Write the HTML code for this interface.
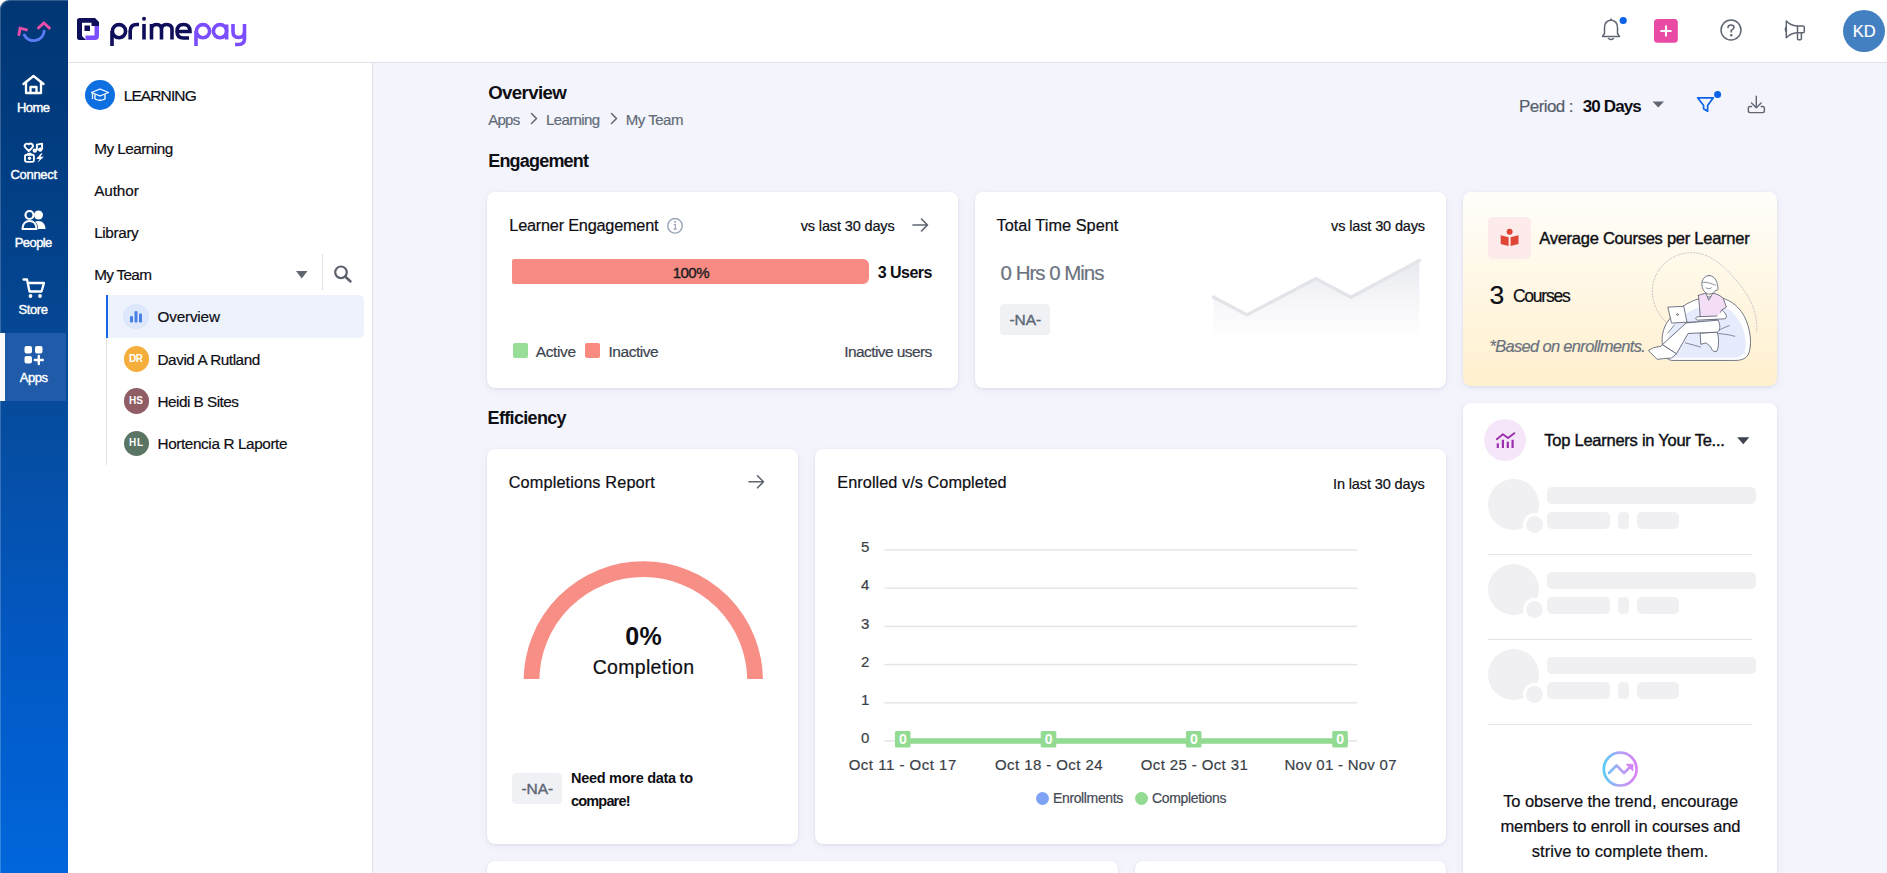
<!DOCTYPE html>
<html><head><meta charset="utf-8"><title>Overview</title>
<style>
html,body{margin:0;padding:0;}
body{width:1887px;height:873px;overflow:hidden;position:relative;font-family:"Liberation Sans",sans-serif;background:#f4f5fc;}
.a{position:absolute;}
.t{position:absolute;white-space:nowrap;}
</style></head><body>
<div class="a" style="left:0px;top:0px;width:1887px;height:873px;background:#f4f5fc;"></div>
<div class="a" style="left:0px;top:0px;width:68px;height:62px;background:#fff;"></div>
<div class="a" style="left:68px;top:0px;width:1819px;height:62px;background:#fff;"></div>
<div class="a" style="left:68px;top:62px;width:1819px;height:1px;background:#dfe1e6;"></div>
<div class="a" style="left:68px;top:63px;width:304px;height:810px;background:#fff;"></div>
<div class="a" style="left:372px;top:63px;width:1px;height:810px;background:#dfe1e6;"></div>
<div class="a" style="left:0;top:0;width:68px;height:873px;border-top-left-radius:9px;box-shadow:inset 1px 1px 0 rgba(255,255,255,0.2);background:linear-gradient(180deg,#013673 0%,#023f85 22%,#064b9c 46%,#0358c2 73%,#0066db 100%);"></div>
<div class="a" style="left:4.5px;top:333px;width:61.5px;height:68px;background:#1f5ba9;"></div>
<div class="a" style="left:0px;top:333px;width:4.5px;height:68px;background:#fafbfd;"></div>
<svg class="a" style="left:0;top:0" width="68" height="62" viewBox="0 0 68 62">
<path d="M18.8 35.8 L20 28.2 L27.6 30.2" fill="none" stroke="#ec4fa8" stroke-width="2.8" stroke-linecap="butt" stroke-linejoin="miter"/>
<path d="M37.6 28.7 L43.8 22.9 L50.3 28.9" fill="none" stroke="#ec4fa8" stroke-width="2.8" stroke-linecap="butt" stroke-linejoin="miter"/>
<path d="M24.3 35 A10.6 10.6 0 0 0 44.2 31.2" fill="none" stroke="#5a7cf2" stroke-width="2.9" stroke-linecap="round"/>
</svg>
<svg class="a" style="left:0;top:62px" width="68" height="340" viewBox="0 62 68 340">
<g fill="none" stroke="#fff" stroke-width="2.3" stroke-linejoin="round" stroke-linecap="round">
<path d="M23.5 84 L33.5 76 L43.5 84"/>
<path d="M26 82 V93 H41 V82"/>
<path d="M30.5 93 V87 H36.5 V93"/>
</g>
<path d="M28.8 151 L25.4 147.6 A2.35 2.35 0 0 1 28.8 144.3 A2.35 2.35 0 0 1 32.2 147.6 Z" fill="none" stroke="#fff" stroke-width="1.9" stroke-linejoin="round"/>
<path d="M36.9 150.6 V144.6 L42.1 143.6 V149.6" fill="none" stroke="#fff" stroke-width="1.9" stroke-linejoin="round"/>
<circle cx="34.8" cy="150.6" r="2.2" fill="#fff"/>
<circle cx="40.2" cy="149.6" r="2.2" fill="#fff"/>
<rect x="25" y="154.8" width="8.9" height="7.1" rx="1.8" fill="none" stroke="#fff" stroke-width="1.9"/>
<rect x="27.3" y="152.8" width="4.3" height="2.5" rx="0.8" fill="#fff"/>
<circle cx="29.5" cy="158.3" r="1.7" fill="#fff"/>
<path d="M41.2 153.2 L36.2 158.9 H39.6 L37.4 162.8 L43.8 156.8 H40.4 L42.6 153.2 Z" fill="#fff"/>
<g fill="none" stroke="#fff" stroke-width="2.2">
<circle cx="29.5" cy="215" r="4"/>
<path d="M22.5 229 c0-5 3-8 7-8 s7 3 7 8z" stroke-linejoin="round"/>
</g>
<circle cx="38.5" cy="215" r="4.5" fill="#fff"/>
<path d="M38.5 221 c4 0 7 3.2 7 8 h-7.5 c0-3.5 -1-6 -3-7.3 c1-.5 2.3-.7 3.5-.7z" fill="#fff"/>
<g fill="none" stroke="#fff" stroke-width="2.3" stroke-linejoin="round" stroke-linecap="round">
<path d="M23.5 279.5 H27 L29.5 291.5 H41.5 L44 283 H28"/>
</g>
<circle cx="30.5" cy="296" r="1.9" fill="#fff"/>
<circle cx="40" cy="296" r="1.9" fill="#fff"/>
<rect x="24.5" y="346" width="7.5" height="7.5" rx="2" fill="#fff"/>
<rect x="35" y="346" width="7.5" height="7.5" rx="2" fill="#fff"/>
<rect x="24.5" y="356" width="7.5" height="7.5" rx="2" fill="#fff"/>
<path d="M38.8 356 V364 M34.8 360 H42.8" stroke="#fff" stroke-width="2.4" stroke-linecap="round"/>
</svg>
<div class="t" style="left:17.00px;top:101.30px;font-size:13px;line-height:13px;color:#ffffff;font-weight:400;-webkit-text-stroke:0.4px currentColor;letter-spacing:-0.595px;">Home</div>
<div class="t" style="left:10.50px;top:168.30px;font-size:13px;line-height:13px;color:#ffffff;font-weight:400;-webkit-text-stroke:0.4px currentColor;letter-spacing:-0.304px;">Connect</div>
<div class="t" style="left:14.80px;top:236.30px;font-size:13px;line-height:13px;color:#ffffff;font-weight:400;-webkit-text-stroke:0.4px currentColor;letter-spacing:-0.596px;">People</div>
<div class="t" style="left:18.50px;top:303.30px;font-size:13px;line-height:13px;color:#ffffff;font-weight:400;-webkit-text-stroke:0.4px currentColor;letter-spacing:-0.393px;">Store</div>
<div class="t" style="left:19.70px;top:371.10px;font-size:13px;line-height:13px;color:#ffffff;font-weight:400;-webkit-text-stroke:0.4px currentColor;letter-spacing:-0.442px;">Apps</div>
<svg class="a" style="left:68px;top:0" width="190" height="62" viewBox="68 0 190 62">
<path d="M77 20.5 Q77 18 79.5 18 H95 L99 22 V26 H91.5 V22.8 H82 V36 L86 40 H79.5 Q77 40 77 37.5z" fill="#0f0e5a"/>
<rect x="84.5" y="25.5" width="5.5" height="5.5" fill="#0f0e5a"/>
<path d="M99 26 V36 Q99 40 95 40 H85.5 V35.5 H94.5 V26z" fill="#7b4dff"/>
<g fill="none" stroke-width="3.6" stroke-linecap="butt">
<g stroke="#0f0e5a">
<path d="M112 46 V31"/><circle cx="119" cy="31.2" r="6.6"/>
<path d="M130.2 39.5 V31 Q130.2 24.5 137 24.5 H139"/>
<path d="M144 39.5 V24"/>
<path d="M151.5 39.5 V24 M151.5 29.5 Q151.5 24.5 156.5 24.5 Q161.5 24.5 161.5 29.5 V39.5 M161.5 29.5 Q161.5 24.5 166.5 24.5 Q172 24.5 172 29.5 V39.5"/>
<path d="M177 31.5 H190 Q190 24.5 183.5 24.5 Q177 24.5 177 31.5 Q177 38 183.5 38 H189"/>
</g>
<g stroke="#7b4dff">
<path d="M196 46 V31"/><circle cx="203" cy="31.2" r="6.6"/>
<circle cx="220" cy="31.2" r="6.6"/><path d="M226.6 24.5 V39.5"/>
<path d="M233 24 V31.5 Q233 37.5 238.5 37.5 Q244.5 37.5 244.5 31.5 V24 M244.5 31.5 V39 Q244.5 44.5 238.5 44.5 H235"/>
</g>
</g>
<circle cx="144" cy="18.8" r="2" fill="#0f0e5a"/>
</svg>
<svg class="a" style="left:1580px;top:0" width="307" height="62" viewBox="1580 0 307 62">
<g fill="none" stroke="#5f6672" stroke-width="1.5" stroke-linejoin="round">
<path d="M1602.5 36.5 H1619.5 L1617.5 33.5 V27.5 Q1617.5 21 1611 20 Q1604.5 21 1604.5 27.5 V33.5z"/>
<path d="M1608.5 38.5 Q1611 40.5 1613.5 38.5" stroke-linecap="round"/>
<path d="M1611 18.5 V20"/>
</g>
<circle cx="1623.2" cy="20.5" r="3.6" fill="#0a63e8"/>
<rect x="1654" y="19" width="23.8" height="23.8" rx="3.5" fill="#e84aa4"/>
<path d="M1666 25.4 V36.6 M1660.4 31 H1671.6" stroke="#fff" stroke-width="2.1" stroke-linecap="butt"/>
<circle cx="1731" cy="30" r="10" fill="none" stroke="#5f6672" stroke-width="1.5"/>
<path d="M1728 27.6 Q1728 25 1731 25 Q1734 25 1734 27.3 Q1734 29 1731.2 30.5 V32" fill="none" stroke="#5f6672" stroke-width="1.6" stroke-linecap="round"/>
<circle cx="1731.2" cy="35.3" r="1.2" fill="#5f6672"/>
<g fill="none" stroke="#5f6672" stroke-width="1.5" stroke-linejoin="round" stroke-linecap="round">
<path d="M1786.3 21 Q1790.5 25.5 1797 26 H1803 Q1804.3 26 1804.3 27.3 V31.4 Q1804.3 32.7 1803 32.7 H1797 Q1790.5 33.2 1786.3 37.7 Z"/>
<path d="M1797.5 26 V32.7 M1797.5 32.7 V38.8 Q1797.5 39.8 1798.5 39.8 H1800.4 Q1801.4 39.8 1801.4 38.8 V32.7"/>
<path d="M1785.8 27.6 Q1784.5 29.4 1785.8 31.2"/>
</g>
</svg>
<div class="a" style="left:1843px;top:9.8px;width:42px;height:42px;border-radius:50%;background:#4380c1;"></div>
<div class="t" style="left:1852.70px;top:22.83px;font-size:16.5px;line-height:16.5px;color:#fff;-webkit-text-stroke:0.2px currentColor;letter-spacing:0.181px;">KD</div>
<div class="a" style="left:85px;top:80px;width:30px;height:30px;border-radius:50%;background:#0d6fe0;"></div>
<svg class="a" style="left:85px;top:80px" width="30" height="30" viewBox="0 0 30 30">
<g fill="none" stroke="#fff" stroke-width="1.3" stroke-linejoin="round">
<path d="M6.5 12.5 L15 9 L23.5 12.5 L15 16z"/>
<path d="M10 14.3 V19 Q15 21.5 20 19 V14.3"/>
<path d="M7.5 13.2 V19"/>
</g></svg>
<div class="t" style="left:123.70px;top:88.38px;font-size:15.5px;line-height:15.5px;color:#0e0e14;-webkit-text-stroke:0.2px currentColor;letter-spacing:-0.891px;">LEARNING</div>
<div class="t" style="left:94.20px;top:141.05px;font-size:15.3px;line-height:15.3px;color:#0e0e14;-webkit-text-stroke:0.2px currentColor;letter-spacing:-0.520px;">My Learning</div>
<div class="t" style="left:94.20px;top:183.05px;font-size:15.3px;line-height:15.3px;color:#0e0e14;-webkit-text-stroke:0.2px currentColor;letter-spacing:-0.095px;">Author</div>
<div class="t" style="left:94.20px;top:225.05px;font-size:15.3px;line-height:15.3px;color:#0e0e14;-webkit-text-stroke:0.2px currentColor;letter-spacing:-0.362px;">Library</div>
<div class="t" style="left:94.20px;top:267.05px;font-size:15.3px;line-height:15.3px;color:#0e0e14;-webkit-text-stroke:0.2px currentColor;letter-spacing:-0.680px;">My Team</div>
<svg class="a" style="left:280px;top:250px" width="90" height="40" viewBox="280 250 90 40">
<path d="M296 271 H307.5 L301.75 278.5z" fill="#5f6672"/>
<rect x="322" y="254" width="1" height="40" fill="#e2e4e8"/>
<circle cx="341" cy="272.3" r="5.8" fill="none" stroke="#5b616d" stroke-width="2.2"/>
<path d="M345.2 276.5 L350.5 281.5" stroke="#5b616d" stroke-width="2.5" stroke-linecap="round"/>
</svg>
<div class="a" style="left:106px;top:295px;width:1px;height:170px;background:#dfe1e6;"></div>
<div class="a" style="left:106px;top:295px;width:258px;height:43px;background:#edf2fd;border-radius:0 5px 5px 0;"></div>
<div class="a" style="left:106px;top:295px;width:2px;height:43px;background:#1a66e0;"></div>
<div class="a" style="left:123px;top:303.5px;width:25.5px;height:25.5px;border-radius:50%;background:#dde7fb;"></div>
<svg class="a" style="left:123px;top:303.5px" width="26" height="26" viewBox="0 0 26 26">
<g fill="#4a80e6"><rect x="7" y="12" width="3" height="6.5" rx="1.2"/><rect x="11.5" y="7" width="3" height="11.5" rx="1.2"/><rect x="16" y="9.5" width="3" height="9" rx="1.2"/></g>
</svg>
<div class="t" style="left:157.50px;top:309.05px;font-size:15.3px;line-height:15.3px;color:#0e0e14;-webkit-text-stroke:0.2px currentColor;letter-spacing:-0.186px;">Overview</div>
<div class="a" style="left:123.5px;top:346.0px;width:25.5px;height:25.5px;border-radius:50%;background:#f5ad3c;"></div>
<div class="t" style="left:129.00px;top:353.84px;font-size:10px;line-height:10px;color:#fff;font-weight:700;letter-spacing:-0.440px;">DR</div>
<div class="t" style="left:157.50px;top:351.55px;font-size:15.3px;line-height:15.3px;color:#0e0e14;-webkit-text-stroke:0.2px currentColor;letter-spacing:-0.434px;">David A Rutland</div>
<div class="a" style="left:123.5px;top:388.0px;width:25.5px;height:25.5px;border-radius:50%;background:#8f5d63;"></div>
<div class="t" style="left:129.00px;top:395.84px;font-size:10px;line-height:10px;color:#fff;font-weight:700;letter-spacing:0.110px;">HS</div>
<div class="t" style="left:157.50px;top:393.55px;font-size:15.3px;line-height:15.3px;color:#0e0e14;-webkit-text-stroke:0.2px currentColor;letter-spacing:-0.508px;">Heidi B Sites</div>
<div class="a" style="left:123.5px;top:430.5px;width:25.5px;height:25.5px;border-radius:50%;background:#5b7565;"></div>
<div class="t" style="left:129.00px;top:438.34px;font-size:10px;line-height:10px;color:#fff;font-weight:700;letter-spacing:0.670px;">HL</div>
<div class="t" style="left:157.50px;top:436.05px;font-size:15.3px;line-height:15.3px;color:#0e0e14;-webkit-text-stroke:0.2px currentColor;letter-spacing:-0.384px;">Hortencia R Laporte</div>
<div class="t" style="left:488.20px;top:83.97px;font-size:18.7px;line-height:18.7px;color:#0e0e14;font-weight:700;letter-spacing:-0.642px;">Overview</div>
<div class="t" style="left:488.20px;top:112.20px;font-size:15px;line-height:15px;color:#626b78;-webkit-text-stroke:0.2px currentColor;letter-spacing:-0.728px;">Apps</div>
<div class="t" style="left:545.90px;top:112.20px;font-size:15px;line-height:15px;color:#626b78;-webkit-text-stroke:0.2px currentColor;letter-spacing:-0.597px;">Learning</div>
<div class="t" style="left:625.70px;top:112.20px;font-size:15px;line-height:15px;color:#626b78;-webkit-text-stroke:0.2px currentColor;letter-spacing:-0.462px;">My Team</div>
<svg class="a" style="left:520px;top:105px" width="110" height="30" viewBox="520 105 110 30">
<g fill="none" stroke="#5f6672" stroke-width="1.5" stroke-linecap="round" stroke-linejoin="round">
<path d="M531.5 113.5 L536.5 118.5 L531.5 123.5"/>
<path d="M611.5 113.5 L616.5 118.5 L611.5 123.5"/>
</g></svg>
<div class="t" style="left:488.20px;top:152.16px;font-size:18px;line-height:18px;color:#0e0e14;font-weight:700;letter-spacing:-0.802px;">Engagement</div>
<div class="t" style="left:1519.00px;top:97.61px;font-size:17px;line-height:17px;color:#565e6b;-webkit-text-stroke:0.2px currentColor;letter-spacing:-0.583px;">Period :</div>
<div class="t" style="left:1582.80px;top:97.61px;font-size:17px;line-height:17px;color:#0e0e14;font-weight:700;letter-spacing:-0.880px;">30 Days</div>
<svg class="a" style="left:1640px;top:85px" width="140" height="40" viewBox="1640 85 140 40">
<path d="M1652.5 101.5 H1664 L1658.25 107.5z" fill="#5f6672"/>
<path d="M1697.6 97.8 H1713.3 L1707.6 105.6 V111.2 L1703.6 108.7 V105.6z" fill="none" stroke="#0a63e8" stroke-width="1.7" stroke-linejoin="round"/>
<circle cx="1717.6" cy="94.4" r="3.5" fill="#0a63e8"/>
<g fill="none" stroke="#5f6672" stroke-width="1.4" stroke-linecap="round" stroke-linejoin="round">
<path d="M1756.3 96.2 V107.6 M1751.5 103 L1756.3 107.7 L1761.1 103"/>
<path d="M1751.5 106.5 H1750.1 Q1748.3 106.5 1748.3 108.3 V110.8 Q1748.3 112.6 1750.1 112.6 H1762.6 Q1764.4 112.6 1764.4 110.8 V108.3 Q1764.4 106.5 1762.6 106.5 H1761.2"/>
</g></svg>
<div class="a" style="left:487px;top:192px;width:471px;height:196px;background:#fff;box-shadow:0 1px 3px rgba(30,40,100,0.09),0 2px 10px rgba(30,40,100,0.06);border-radius:8px;"></div>
<div class="a" style="left:975px;top:192px;width:471px;height:196px;background:#fff;box-shadow:0 1px 3px rgba(30,40,100,0.09),0 2px 10px rgba(30,40,100,0.06);border-radius:8px;"></div>
<div class="a" style="left:1463px;top:192px;width:314px;height:194px;background:linear-gradient(180deg,#fffefb 0%,#fff7e4 50%,#ffefcd 100%);box-shadow:0 1px 3px rgba(30,40,100,0.09),0 2px 10px rgba(30,40,100,0.06);border-radius:8px;"></div>
<div class="a" style="left:1463px;top:403px;width:314px;height:520px;background:#fff;box-shadow:0 1px 3px rgba(30,40,100,0.09),0 2px 10px rgba(30,40,100,0.06);border-radius:8px;"></div>
<div class="a" style="left:487px;top:449px;width:311px;height:395px;background:#fff;box-shadow:0 1px 3px rgba(30,40,100,0.09),0 2px 10px rgba(30,40,100,0.06);border-radius:8px;"></div>
<div class="a" style="left:815px;top:449px;width:631px;height:395px;background:#fff;box-shadow:0 1px 3px rgba(30,40,100,0.09),0 2px 10px rgba(30,40,100,0.06);border-radius:8px;"></div>
<div class="a" style="left:487px;top:861px;width:631px;height:60px;background:#fff;box-shadow:0 1px 3px rgba(30,40,100,0.09),0 2px 10px rgba(30,40,100,0.06);border-radius:8px;"></div>
<div class="a" style="left:1135px;top:861px;width:311px;height:60px;background:#fff;box-shadow:0 1px 3px rgba(30,40,100,0.09),0 2px 10px rgba(30,40,100,0.06);border-radius:8px;"></div>
<div class="t" style="left:509.30px;top:217.10px;font-size:16.3px;line-height:16.3px;color:#0e0e14;-webkit-text-stroke:0.2px currentColor;letter-spacing:-0.221px;">Learner Engagement</div>
<svg class="a" style="left:660px;top:210px" width="30" height="30" viewBox="660 210 30 30">
<circle cx="675" cy="225.8" r="7.3" fill="none" stroke="#9aa6b8" stroke-width="1.4"/>
<circle cx="675" cy="222" r="1" fill="#9aa6b8"/>
<path d="M673.6 224.5 H675.3 V229 M673.5 229.2 H676.8" fill="none" stroke="#9aa6b8" stroke-width="1.2"/>
</svg>
<div class="t" style="left:800.70px;top:218.73px;font-size:14.5px;line-height:14.5px;color:#0e0e14;-webkit-text-stroke:0.2px currentColor;letter-spacing:-0.136px;">vs last 30 days</div>
<svg class="a" style="left:905px;top:212px" width="30" height="30" viewBox="905 212 30 30">
<path d="M913 225 H927.5 M921.5 219 L927.5 225 L921.5 231" fill="none" stroke="#5d6470" stroke-width="1.6" stroke-linecap="round" stroke-linejoin="round"/>
</svg>
<div class="a" style="left:511.5px;top:259px;width:357.5px;height:25px;background:#f78b83;border-radius:2px 6px 6px 2px;"></div>
<div class="t" style="left:672.70px;top:265.00px;font-size:15px;line-height:15px;color:#1d1d22;font-weight:400;-webkit-text-stroke:0.4px currentColor;letter-spacing:-0.523px;">100%</div>
<div class="t" style="left:877.80px;top:265.06px;font-size:16px;line-height:16px;color:#0e0e14;font-weight:700;letter-spacing:-0.554px;">3 Users</div>
<div class="a" style="left:512.5px;top:343px;width:15px;height:15px;background:#98dd98;border-radius:2px;"></div>
<div class="a" style="left:585px;top:343px;width:15px;height:15px;background:#f88a80;border-radius:2px;"></div>
<div class="t" style="left:535.80px;top:344.08px;font-size:15.5px;line-height:15.5px;color:#3d4450;-webkit-text-stroke:0.2px currentColor;letter-spacing:-0.401px;">Active</div>
<div class="t" style="left:608.50px;top:344.08px;font-size:15.5px;line-height:15.5px;color:#3d4450;-webkit-text-stroke:0.2px currentColor;letter-spacing:-0.459px;">Inactive</div>
<div class="t" style="left:844.30px;top:344.08px;font-size:15.5px;line-height:15.5px;color:#3d4450;-webkit-text-stroke:0.2px currentColor;letter-spacing:-0.586px;">Inactive users</div>
<div class="t" style="left:996.50px;top:217.00px;font-size:16.3px;line-height:16.3px;color:#0e0e14;-webkit-text-stroke:0.2px currentColor;letter-spacing:0.040px;">Total Time Spent</div>
<div class="t" style="left:1331.10px;top:218.73px;font-size:14.5px;line-height:14.5px;color:#0e0e14;-webkit-text-stroke:0.2px currentColor;letter-spacing:-0.136px;">vs last 30 days</div>
<div class="t" style="left:1000.60px;top:263.25px;font-size:20.5px;line-height:20.5px;color:#6b7380;-webkit-text-stroke:0.2px currentColor;letter-spacing:-1.022px;">0 Hrs 0 Mins</div>
<div class="a" style="left:1000.2px;top:304.2px;width:49.8px;height:30.6px;background:#f0f1f4;border-radius:4px;"></div>
<div class="t" style="left:1009.50px;top:311.98px;font-size:15.5px;line-height:15.5px;color:#5d6675;font-weight:400;-webkit-text-stroke:0.4px currentColor;letter-spacing:-0.084px;">-NA-</div>
<svg class="a" style="left:1200px;top:250px" width="230" height="90" viewBox="1200 250 230 90">
<defs><linearGradient id="spg" x1="0" y1="0" x2="0" y2="1">
<stop offset="0" stop-color="#e4e5ec" stop-opacity="0.9"/><stop offset="1" stop-color="#f4f5f8" stop-opacity="0.2"/></linearGradient></defs>
<path d="M1213.4 297 L1247 315 L1315.8 278.5 L1351 297.3 L1419.4 260.5 V335 H1213.4z" fill="url(#spg)"/>
<path d="M1213.4 297 L1247 315 L1315.8 278.5 L1351 297.3 L1419.4 260.5" fill="none" stroke="#e3e4ea" stroke-width="3.3" stroke-linecap="round" stroke-linejoin="miter"/>
</svg>
<div class="a" style="left:1488px;top:217px;width:42.5px;height:42px;background:#fdeaea;border-radius:5px;"></div>
<svg class="a" style="left:1488px;top:217px" width="43" height="42" viewBox="1488 217 43 42">
<circle cx="1509.6" cy="231.7" r="3" fill="#df4636"/>
<path d="M1500.7 235.2 L1508.6 237.3 V246 L1500.7 244z M1518.5 235.2 L1510.6 237.3 V246 L1518.5 244z" fill="#df4636"/>
</svg>
<div class="t" style="left:1539.20px;top:229.93px;font-size:16.5px;line-height:16.5px;color:#0e0e14;font-weight:400;-webkit-text-stroke:0.4px currentColor;letter-spacing:-0.253px;">Average Courses per Learner</div>
<div class="t" style="left:1489.60px;top:282.47px;font-size:26.5px;line-height:26.5px;color:#0e0e14;-webkit-text-stroke:0.2px currentColor;">3</div>
<div class="t" style="left:1512.90px;top:288.49px;font-size:17.5px;line-height:17.5px;color:#0e0e14;-webkit-text-stroke:0.2px currentColor;letter-spacing:-1.228px;">Courses</div>
<div class="t" style="left:1489.40px;top:337.53px;font-size:16.5px;line-height:16.5px;color:#6a7180;-webkit-text-stroke:0.2px currentColor;font-style:italic;letter-spacing:-0.676px;">*Based on enrollments.</div>
<svg class="a" style="left:1640px;top:248px" width="125" height="120" viewBox="0 0 909 873">
<g fill="none" stroke-linejoin="round" stroke-linecap="round">
<path d="M185 535 C120 470 80 380 92 280 C105 170 200 50 350 35 C470 25 560 90 640 170 C720 250 790 340 830 450 C850 520 852 580 848 610" stroke="#a9acba" stroke-width="5" stroke-dasharray="9 13"/>
<path d="M165 720 C150 640 170 560 230 500 C300 420 380 375 470 360 C600 340 700 390 760 500 C800 580 815 680 795 755 C780 805 740 818 690 818 L240 818 C190 818 170 780 165 720z" fill="#ffffff" stroke="#585c70" stroke-width="6"/>
<path d="M200 730 C195 640 220 570 280 520 C340 470 400 440 440 430 L640 440 C720 500 770 600 770 700 C770 770 740 795 690 798 L250 798 C215 798 202 770 200 730z" fill="#e7ecfc"/>
<path d="M570 600 C600 585 625 572 650 565 M560 622 C600 625 650 630 690 642" stroke="#585c70" stroke-width="5"/>
<path d="M425 345 C450 335 470 330 480 332 L500 380 L530 328 C560 335 590 350 605 365 L628 430 L590 455 C580 490 570 510 560 522 L440 522 C435 460 430 400 425 345z" fill="#f3def6" stroke="#585c70" stroke-width="6"/>
<path d="M505 200 C470 200 448 230 450 265 C452 300 470 330 500 335 C530 335 545 320 552 305 C565 315 572 300 565 280 C560 240 545 205 505 200z" fill="#ffffff" stroke="#585c70" stroke-width="6"/>
<path d="M458 250 C490 245 520 260 548 270 M480 290 C495 300 510 298 520 290" stroke="#585c70" stroke-width="5"/>
<path d="M205 430 L318 424 L342 540 L232 546z" fill="#ffffff" stroke="#585c70" stroke-width="6"/>
<circle cx="272" cy="484" r="7" fill="none" stroke="#585c70" stroke-width="5"/>
<path d="M342 540 L440 538" stroke="#585c70" stroke-width="6"/>
<path d="M600 455 C630 480 635 500 620 515 L420 525 C400 520 400 505 420 500 L560 495" fill="#ffffff" stroke="#585c70" stroke-width="6"/>
<path d="M440 620 L560 612 C575 640 575 720 560 750 C540 760 520 745 515 720 L480 690 L445 700z" fill="#ffffff" stroke="#585c70" stroke-width="6"/>
<path d="M338 545 L568 525 C585 560 585 600 565 612 L350 622 L265 770 L165 705z" fill="#ffffff" stroke="#585c70" stroke-width="6"/>
<path d="M165 705 L265 770 L230 800 L170 805 L125 810 L60 745 L100 725 L150 715z" fill="#ffffff" stroke="#585c70" stroke-width="6"/>
<path d="M330 690 L440 720 M250 560 L200 620" stroke="#585c70" stroke-width="5"/>
</g>
</svg>
<div class="t" style="left:487.60px;top:409.16px;font-size:18px;line-height:18px;color:#0e0e14;font-weight:700;letter-spacing:-0.670px;">Efficiency</div>
<div class="t" style="left:508.70px;top:474.10px;font-size:16.3px;line-height:16.3px;color:#0e0e14;-webkit-text-stroke:0.2px currentColor;letter-spacing:0.133px;">Completions Report</div>
<svg class="a" style="left:740px;top:470px" width="30" height="24" viewBox="740 470 30 24">
<path d="M749 481.8 H763.5 M757.5 475.8 L763.5 481.8 L757.5 487.8" fill="none" stroke="#5d6470" stroke-width="1.6" stroke-linecap="round" stroke-linejoin="round"/>
</svg>
<svg class="a" style="left:500px;top:540px" width="290" height="139" viewBox="500 540 290 139">
<path d="M531.5 681 A111.8 111.8 0 0 1 755.1 681" fill="none" stroke="#f88f86" stroke-width="15.8"/>
</svg>
<div class="t" style="left:625.30px;top:624.34px;font-size:25px;line-height:25px;color:#0e0e14;font-weight:700;letter-spacing:0.175px;">0%</div>
<div class="t" style="left:592.70px;top:658.29px;font-size:19.5px;line-height:19.5px;color:#0e0e14;-webkit-text-stroke:0.2px currentColor;letter-spacing:0.297px;">Completion</div>
<div class="a" style="left:512px;top:773px;width:49.5px;height:31px;background:#f0f1f4;border-radius:4px;"></div>
<div class="t" style="left:521.40px;top:781.28px;font-size:15.5px;line-height:15.5px;color:#5d6675;font-weight:400;-webkit-text-stroke:0.4px currentColor;letter-spacing:-0.017px;">-NA-</div>
<div class="t" style="left:571.00px;top:771.43px;font-size:14.5px;line-height:14.5px;color:#0e0e14;font-weight:700;letter-spacing:-0.281px;">Need more data to</div>
<div class="t" style="left:571.00px;top:794.23px;font-size:14.5px;line-height:14.5px;color:#0e0e14;font-weight:700;letter-spacing:-0.823px;">compare!</div>
<div class="t" style="left:837.30px;top:474.10px;font-size:16.3px;line-height:16.3px;color:#0e0e14;-webkit-text-stroke:0.2px currentColor;letter-spacing:0.047px;">Enrolled v/s Completed</div>
<div class="t" style="left:1333.00px;top:477.33px;font-size:14.5px;line-height:14.5px;color:#0e0e14;-webkit-text-stroke:0.2px currentColor;letter-spacing:-0.121px;">In last 30 days</div>
<svg class="a" style="left:815px;top:520px" width="631" height="300" viewBox="815 520 631 300"><rect x="884.5" y="549.25" width="472.5" height="1.5" fill="#e4e5e9"/><rect x="884.5" y="587.45" width="472.5" height="1.5" fill="#e4e5e9"/><rect x="884.5" y="625.65" width="472.5" height="1.5" fill="#e4e5e9"/><rect x="884.5" y="663.85" width="472.5" height="1.5" fill="#e4e5e9"/><rect x="884.5" y="702.05" width="472.5" height="1.5" fill="#e4e5e9"/><rect x="884.5" y="740.25" width="472.5" height="1.5" fill="#e4e5e9"/><rect x="895" y="738.2" width="453" height="5.6" fill="#93db93"/><rect x="894.9" y="731" width="15.6" height="16.4" rx="1.5" fill="#93db93"/><rect x="1040.7" y="731" width="15.6" height="16.4" rx="1.5" fill="#93db93"/><rect x="1185.9" y="731" width="15.6" height="16.4" rx="1.5" fill="#93db93"/><rect x="1332.2" y="731" width="15.6" height="16.4" rx="1.5" fill="#93db93"/></svg>
<div class="t" style="left:861.00px;top:539.10px;font-size:15px;line-height:15px;color:#3a3f48;-webkit-text-stroke:0.2px currentColor;">5</div>
<div class="t" style="left:861.00px;top:577.30px;font-size:15px;line-height:15px;color:#3a3f48;-webkit-text-stroke:0.2px currentColor;">4</div>
<div class="t" style="left:861.00px;top:615.50px;font-size:15px;line-height:15px;color:#3a3f48;-webkit-text-stroke:0.2px currentColor;">3</div>
<div class="t" style="left:861.00px;top:653.70px;font-size:15px;line-height:15px;color:#3a3f48;-webkit-text-stroke:0.2px currentColor;">2</div>
<div class="t" style="left:861.00px;top:691.90px;font-size:15px;line-height:15px;color:#3a3f48;-webkit-text-stroke:0.2px currentColor;">1</div>
<div class="t" style="left:861.00px;top:730.10px;font-size:15px;line-height:15px;color:#3a3f48;-webkit-text-stroke:0.2px currentColor;">0</div>
<div class="t" style="left:898.90px;top:732.45px;font-size:14px;line-height:14px;color:#fff;font-weight:700;">0</div>
<div class="t" style="left:1044.70px;top:732.45px;font-size:14px;line-height:14px;color:#fff;font-weight:700;">0</div>
<div class="t" style="left:1189.90px;top:732.45px;font-size:14px;line-height:14px;color:#fff;font-weight:700;">0</div>
<div class="t" style="left:1336.20px;top:732.45px;font-size:14px;line-height:14px;color:#fff;font-weight:700;">0</div>
<div class="t" style="left:848.70px;top:757.00px;font-size:15px;line-height:15px;color:#3a3f48;-webkit-text-stroke:0.2px currentColor;letter-spacing:0.501px;">Oct 11 - Oct 17</div>
<div class="t" style="left:995.00px;top:757.00px;font-size:15px;line-height:15px;color:#3a3f48;-webkit-text-stroke:0.2px currentColor;letter-spacing:0.414px;">Oct 18 - Oct 24</div>
<div class="t" style="left:1140.70px;top:757.00px;font-size:15px;line-height:15px;color:#3a3f48;-webkit-text-stroke:0.2px currentColor;letter-spacing:0.386px;">Oct 25 - Oct 31</div>
<div class="t" style="left:1284.50px;top:757.00px;font-size:15px;line-height:15px;color:#3a3f48;-webkit-text-stroke:0.2px currentColor;letter-spacing:0.258px;">Nov 01 - Nov 07</div>
<div class="a" style="left:1036px;top:791.5px;width:13px;height:13px;border-radius:50%;background:#7fa3f4;"></div>
<div class="a" style="left:1135px;top:791.5px;width:13px;height:13px;border-radius:50%;background:#93db93;"></div>
<div class="t" style="left:1053.00px;top:791.15px;font-size:14px;line-height:14px;color:#444a55;-webkit-text-stroke:0.2px currentColor;letter-spacing:-0.362px;">Enrollments</div>
<div class="t" style="left:1152.00px;top:791.15px;font-size:14px;line-height:14px;color:#444a55;-webkit-text-stroke:0.2px currentColor;letter-spacing:-0.331px;">Completions</div>
<div class="a" style="left:1484px;top:419.3px;width:42px;height:42px;border-radius:50%;background:#f5e7f9;"></div>
<svg class="a" style="left:1484px;top:419.5px" width="42" height="42" viewBox="0 0 42 42">
<g fill="none" stroke="#9b31ad" stroke-linecap="round" stroke-linejoin="round">
<path d="M12.8 19.2 L18.9 14.3 L24 18 L30.3 13.2" stroke-width="2"/>
<path d="M13.8 23.2 V28 M18.9 19.8 V28 M23.8 21.8 V28 M28.6 19.8 V28" stroke-width="2.2" stroke-linecap="butt"/>
</g></svg>
<div class="t" style="left:1544.30px;top:431.93px;font-size:16.5px;line-height:16.5px;color:#0e0e14;font-weight:400;-webkit-text-stroke:0.4px currentColor;letter-spacing:-0.253px;">Top Learners in Your Te...</div>
<svg class="a" style="left:1730px;top:430px" width="25" height="20" viewBox="1730 430 25 20">
<path d="M1737.2 437.2 H1749.3 L1743.25 444.3z" fill="#3f4550"/></svg>
<div class="a" style="left:1488px;top:479px;width:51px;height:51px;border-radius:50%;background:#f0f0f2;"></div>
<div class="a" style="left:1523px;top:513px;width:23px;height:23px;border-radius:50%;background:#f0f0f2;border:3px solid #fff;box-sizing:border-box;"></div>
<div class="a" style="left:1547px;top:487px;width:209px;height:16.5px;background:#f0f0f2;border-radius:5px;"></div>
<div class="a" style="left:1547px;top:512px;width:63px;height:16.5px;background:#f0f0f2;border-radius:5px;"></div>
<div class="a" style="left:1617.7px;top:512px;width:11.5px;height:16.5px;background:#f0f0f2;border-radius:4px;"></div>
<div class="a" style="left:1637px;top:512px;width:42px;height:16.5px;background:#f0f0f2;border-radius:5px;"></div>
<div class="a" style="left:1488px;top:554px;width:264px;height:1px;background:#e3e4e8;"></div>
<div class="a" style="left:1488px;top:564px;width:51px;height:51px;border-radius:50%;background:#f0f0f2;"></div>
<div class="a" style="left:1523px;top:598px;width:23px;height:23px;border-radius:50%;background:#f0f0f2;border:3px solid #fff;box-sizing:border-box;"></div>
<div class="a" style="left:1547px;top:572px;width:209px;height:16.5px;background:#f0f0f2;border-radius:5px;"></div>
<div class="a" style="left:1547px;top:597px;width:63px;height:16.5px;background:#f0f0f2;border-radius:5px;"></div>
<div class="a" style="left:1617.7px;top:597px;width:11.5px;height:16.5px;background:#f0f0f2;border-radius:4px;"></div>
<div class="a" style="left:1637px;top:597px;width:42px;height:16.5px;background:#f0f0f2;border-radius:5px;"></div>
<div class="a" style="left:1488px;top:639px;width:264px;height:1px;background:#e3e4e8;"></div>
<div class="a" style="left:1488px;top:649px;width:51px;height:51px;border-radius:50%;background:#f0f0f2;"></div>
<div class="a" style="left:1523px;top:683px;width:23px;height:23px;border-radius:50%;background:#f0f0f2;border:3px solid #fff;box-sizing:border-box;"></div>
<div class="a" style="left:1547px;top:657px;width:209px;height:16.5px;background:#f0f0f2;border-radius:5px;"></div>
<div class="a" style="left:1547px;top:682px;width:63px;height:16.5px;background:#f0f0f2;border-radius:5px;"></div>
<div class="a" style="left:1617.7px;top:682px;width:11.5px;height:16.5px;background:#f0f0f2;border-radius:4px;"></div>
<div class="a" style="left:1637px;top:682px;width:42px;height:16.5px;background:#f0f0f2;border-radius:5px;"></div>
<div class="a" style="left:1488px;top:724px;width:264px;height:1px;background:#e3e4e8;"></div>
<svg class="a" style="left:1598px;top:748px" width="45" height="45" viewBox="1598 748 45 45">
<defs><linearGradient id="tg" gradientUnits="userSpaceOnUse" x1="1603" y1="0" x2="1638" y2="0"><stop offset="0" stop-color="#55cdf6"/><stop offset="0.5" stop-color="#b3a3f5"/><stop offset="1" stop-color="#dc7ff3"/></linearGradient></defs>
<circle cx="1620.2" cy="769.1" r="16.4" fill="none" stroke="url(#tg)" stroke-width="2.7"/>
<path d="M1609 773 L1616.5 765.5 L1624 773 L1630.5 766.5" fill="none" stroke="url(#tg)" stroke-width="2.6" stroke-linecap="round" stroke-linejoin="round"/>
<path d="M1626.3 764.3 H1632.9 V770.9 Z" fill="#d487f4" stroke="#d487f4" stroke-width="1" stroke-linejoin="round"/>
</svg>
<div class="t" style="left:1503.20px;top:792.53px;font-size:16.5px;line-height:16.5px;color:#0e0e14;-webkit-text-stroke:0.2px currentColor;letter-spacing:-0.086px;">To observe the trend, encourage</div>
<div class="t" style="left:1500.50px;top:817.53px;font-size:16.5px;line-height:16.5px;color:#0e0e14;-webkit-text-stroke:0.2px currentColor;letter-spacing:-0.127px;">members to enroll in courses and</div>
<div class="t" style="left:1531.80px;top:842.53px;font-size:16.5px;line-height:16.5px;color:#0e0e14;-webkit-text-stroke:0.2px currentColor;letter-spacing:0.059px;">strive to complete them.</div>
</body></html>
